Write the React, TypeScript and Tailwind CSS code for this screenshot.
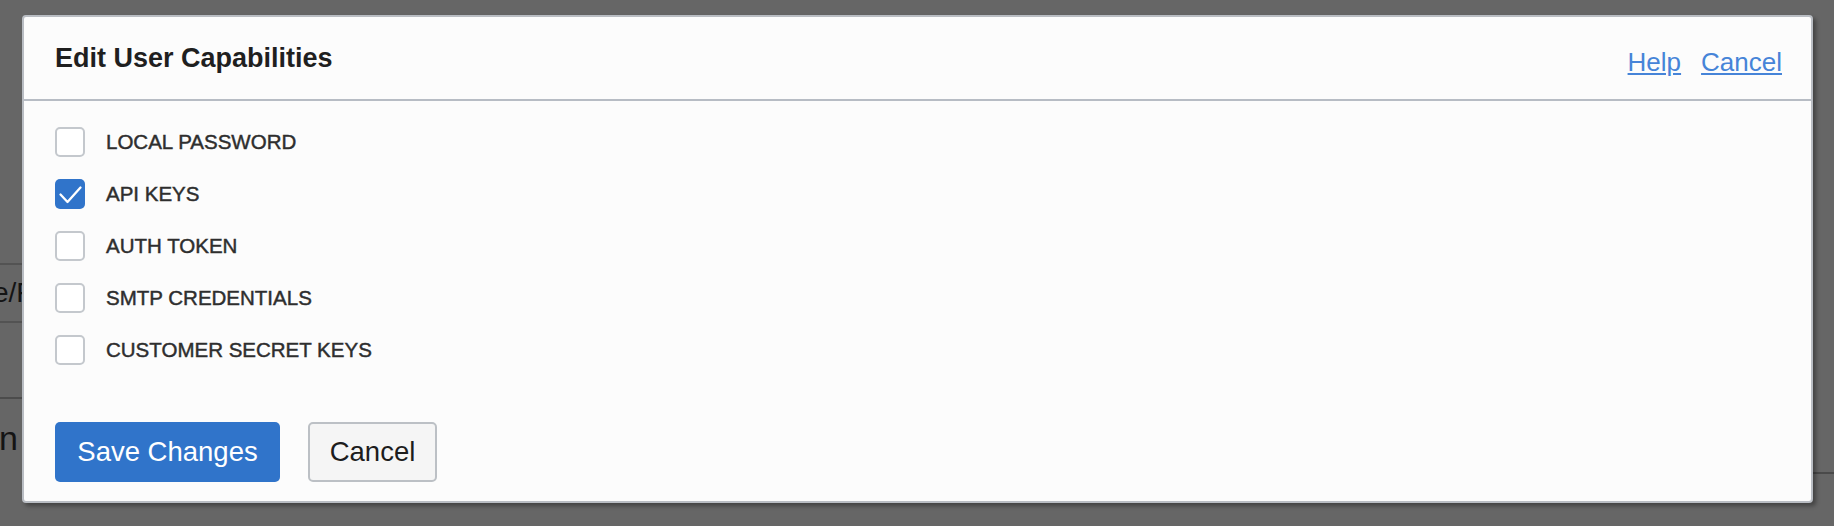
const capabilities = [
  { label: "LOCAL PASSWORD", checked: false },
  { label: "API KEYS", checked: true },
  { label: "AUTH TOKEN", checked: false },
  { label: "SMTP CREDENTIALS", checked: false },
  { label: "CUSTOMER SECRET KEYS", checked: false },
];

function Checkbox({ checked }: { checked: boolean }) {
  if (checked) {
    return (
      <span className="flex h-[30px] w-[30px] shrink-0 items-center justify-center rounded-[5px] bg-[#3074ca]">
        <svg width="30" height="30" viewBox="0 0 30 30" fill="none">
          <polyline
            points="5.5,15.5 12.5,23 25.5,8.5"
            stroke="#ffffff"
            strokeWidth="2.3"
            strokeLinecap="round"
            strokeLinejoin="round"
          />
        </svg>
      </span>
    );
  }
  return (
    <span className="h-[30px] w-[30px] shrink-0 rounded-[5px] border-2 border-[#c4c8cd] bg-white" />
  );
}

function Backdrop() {
  // dimmed page content behind the dialog, only a sliver shows on the left
  return (
    <div className="flex h-full w-full text-[#141414]">
      <div className="w-[22px] overflow-hidden whitespace-nowrap pt-[263px]">
        <div className="flex h-[58px] items-center border-t-2 border-[#535353] text-[28px]">
          <span className="-ml-[7px]">e/F</span>
        </div>
        <div className="h-[76px] border-t-2 border-[#535353]" />
        <div className="border-t-2 border-[#4c4c4c] pt-[22px] text-[34px] leading-none">
          <span className="-ml-[1px]">n</span>
        </div>
      </div>
      <div className="flex-1 pt-[472px]">
        <div className="border-t-2 border-[#4a4a4a]" />
      </div>
    </div>
  );
}

export default function App() {
  return (
    <div className="relative h-[526px] w-[1834px] overflow-hidden bg-[#666666] font-['Liberation_Sans',Arial,sans-serif]">
      <Backdrop />

      <div className="absolute left-[22px] top-[15px] flex h-[488px] w-[1791px] flex-col rounded-[4px] border-2 border-[#b9bdc3] bg-[#fcfcfc] shadow-[3px_3px_4px_rgba(0,0,0,0.35)]">
        <div className="flex h-[84px] shrink-0 items-center justify-between border-b-2 border-[#b7bcc4] pl-[31px] pr-[29px]">
          <h1 className="text-[27px] font-bold leading-none text-[#1f1f1f]">
            Edit User Capabilities
          </h1>
          <div className="mt-[7px] flex items-center gap-[20px] text-[26px] leading-none text-[#4684d8]">
            <a href="#" className="underline decoration-2 underline-offset-[2px]">
              Help
            </a>
            <a href="#" className="underline decoration-2 underline-offset-[2px]">
              Cancel
            </a>
          </div>
        </div>

        <div className="flex flex-col gap-[22px] pl-[31px] pt-[26px]">
          {capabilities.map((c) => (
            <label key={c.label} className="flex h-[30px] items-center gap-[21px]">
              <Checkbox checked={c.checked} />
              <span className="text-[20.5px] leading-none text-[#2e2e2e] [-webkit-text-stroke:0.45px_#2e2e2e]">
                {c.label}
              </span>
            </label>
          ))}
        </div>

        <div className="mt-[57px] flex gap-[28px] pl-[31px]">
          <button className="h-[60px] w-[225px] rounded-[5px] bg-[#3074ca] text-[27.5px] leading-none text-white">
            Save Changes
          </button>
          <button className="h-[60px] w-[129px] rounded-[5px] border-2 border-[#bcc0c5] bg-[#f5f5f5] text-[27.5px] leading-none text-[#1d1d1d]">
            Cancel
          </button>
        </div>
      </div>
    </div>
  );
}
